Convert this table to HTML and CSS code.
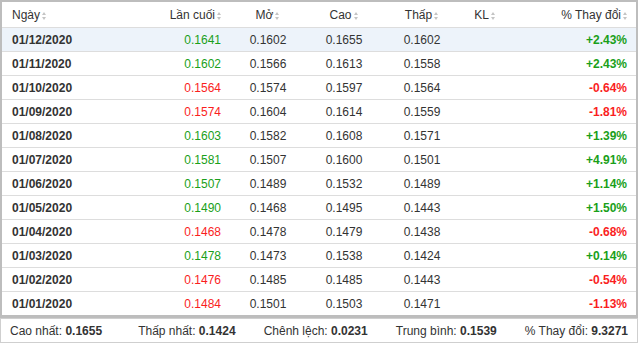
FILE: index.html
```html
<!DOCTYPE html>
<html lang="vi">

<head>
    <meta charset="UTF-8">
    <meta name="viewport" content="width=device-width, initial-scale=1.0">
    <title>Lịch sử giá</title>
    <link rel="stylesheet" href="styles.css">
</head>

<body>
    <div class="history-box">
        <table class="history-table">
            <colgroup>
                <col class="col-date">
                <col class="col-last">
                <col class="col-open">
                <col class="col-high">
                <col class="col-low">
                <col class="col-vol">
                <col class="col-change">
            </colgroup>
            <thead>
                <tr>
                    <th class="left">Ngày<span class="sort"></span></th>
                    <th class="right">Lần cuối<span class="sort"></span></th>
                    <th class="center">Mở<span class="sort"></span></th>
                    <th class="center">Cao<span class="sort"></span></th>
                    <th class="center">Thấp<span class="sort"></span></th>
                    <th class="center">KL<span class="sort"></span></th>
                    <th class="right">% Thay đổi<span class="sort"></span></th>
                </tr>
            </thead>
            <tbody>
                <tr class="row-active">
                    <td class="date">01/12/2020</td>
                    <td class="right up">0.1641</td>
                    <td class="center">0.1602</td>
                    <td class="center">0.1655</td>
                    <td class="center">0.1602</td>
                    <td></td>
                    <td class="right pct up">+2.43%</td>
                </tr>
                <tr>
                    <td class="date">01/11/2020</td>
                    <td class="right up">0.1602</td>
                    <td class="center">0.1566</td>
                    <td class="center">0.1613</td>
                    <td class="center">0.1558</td>
                    <td></td>
                    <td class="right pct up">+2.43%</td>
                </tr>
                <tr>
                    <td class="date">01/10/2020</td>
                    <td class="right down">0.1564</td>
                    <td class="center">0.1574</td>
                    <td class="center">0.1597</td>
                    <td class="center">0.1564</td>
                    <td></td>
                    <td class="right pct down">-0.64%</td>
                </tr>
                <tr>
                    <td class="date">01/09/2020</td>
                    <td class="right down">0.1574</td>
                    <td class="center">0.1604</td>
                    <td class="center">0.1614</td>
                    <td class="center">0.1559</td>
                    <td></td>
                    <td class="right pct down">-1.81%</td>
                </tr>
                <tr>
                    <td class="date">01/08/2020</td>
                    <td class="right up">0.1603</td>
                    <td class="center">0.1582</td>
                    <td class="center">0.1608</td>
                    <td class="center">0.1571</td>
                    <td></td>
                    <td class="right pct up">+1.39%</td>
                </tr>
                <tr>
                    <td class="date">01/07/2020</td>
                    <td class="right up">0.1581</td>
                    <td class="center">0.1507</td>
                    <td class="center">0.1600</td>
                    <td class="center">0.1501</td>
                    <td></td>
                    <td class="right pct up">+4.91%</td>
                </tr>
                <tr>
                    <td class="date">01/06/2020</td>
                    <td class="right up">0.1507</td>
                    <td class="center">0.1489</td>
                    <td class="center">0.1532</td>
                    <td class="center">0.1489</td>
                    <td></td>
                    <td class="right pct up">+1.14%</td>
                </tr>
                <tr>
                    <td class="date">01/05/2020</td>
                    <td class="right up">0.1490</td>
                    <td class="center">0.1468</td>
                    <td class="center">0.1495</td>
                    <td class="center">0.1443</td>
                    <td></td>
                    <td class="right pct up">+1.50%</td>
                </tr>
                <tr>
                    <td class="date">01/04/2020</td>
                    <td class="right down">0.1468</td>
                    <td class="center">0.1478</td>
                    <td class="center">0.1479</td>
                    <td class="center">0.1438</td>
                    <td></td>
                    <td class="right pct down">-0.68%</td>
                </tr>
                <tr>
                    <td class="date">01/03/2020</td>
                    <td class="right up">0.1478</td>
                    <td class="center">0.1473</td>
                    <td class="center">0.1538</td>
                    <td class="center">0.1424</td>
                    <td></td>
                    <td class="right pct up">+0.14%</td>
                </tr>
                <tr>
                    <td class="date">01/02/2020</td>
                    <td class="right down">0.1476</td>
                    <td class="center">0.1485</td>
                    <td class="center">0.1485</td>
                    <td class="center">0.1443</td>
                    <td></td>
                    <td class="right pct down">-0.54%</td>
                </tr>
                <tr>
                    <td class="date">01/01/2020</td>
                    <td class="right down">0.1484</td>
                    <td class="center">0.1501</td>
                    <td class="center">0.1503</td>
                    <td class="center">0.1471</td>
                    <td></td>
                    <td class="right pct down">-1.13%</td>
                </tr>
            </tbody>
        </table>
    </div>

    <div class="summary">
        <span class="summary-first">Cao nhất: <b>0.1655</b></span>
        <span>Thấp nhất: <b>0.1424</b></span>
        <span>Chênh lệch: <b>0.0231</b></span>
        <span>Trung bình: <b>0.1539</b></span>
        <span>% Thay đổi: <b>9.3271</b></span>
    </div>
</body>

</html>
```

FILE: styles.css
```css
body {
    margin: 0;
    width: 638px;
    font-family: 'Liberation Sans', Arial, sans-serif;
    font-size: 12px;
    color: #333;
    background-color: #fff;
}

.history-box {
    border: 2px solid #bdbdbd;
    border-bottom-width: 3px;
}

.history-table {
    width: 100%;
    border-collapse: collapse;
    table-layout: fixed;
}

.col-date {
    width: 138px;
}

.col-last {
    width: 90px;
}

.col-open {
    width: 76px;
}

.col-high {
    width: 76px;
}

.col-low {
    width: 80px;
}

.col-vol {
    width: 46px;
}

.history-table th,
.history-table td {
    height: 23px;
    padding: 0 10px;
    border-bottom: 1px solid #ddd;
    white-space: nowrap;
}

.history-table th {
    height: 25px;
    font-weight: 400;
    color: #333;
}

.history-table tbody tr:last-child td {
    border-bottom: none;
}

.history-table td.pct,
.history-table td.date {
    font-weight: 700;
}

.left {
    text-align: left;
}

.right {
    text-align: right;
}

.center {
    text-align: center;
}

.history-table th.right {
    padding-right: 8px;
}

.history-table td.right {
    padding-right: 9px;
}

.row-active td {
    background-color: #edf3fa;
}

.up {
    color: #1a9f1a;
}

.down {
    color: #fa1e1e;
}

/* little up/down sort arrows next to each header */
.sort {
    display: inline-block;
    width: 5px;
    height: 8px;
    margin-left: 2px;
    vertical-align: -1px;
    position: relative;
}

.sort::before,
.sort::after {
    content: "";
    position: absolute;
    left: 0;
    border-left: 2.5px solid transparent;
    border-right: 2.5px solid transparent;
}

.sort::before {
    top: 0;
    border-bottom: 3px solid #c4c4c4;
}

.sort::after {
    bottom: 0;
    border-top: 3px solid #c4c4c4;
}

.summary {
    display: flex;
    justify-content: space-between;
    align-items: center;
    height: 23px;
    padding: 0 9px;
    border: 1px solid #cfcfcf;
}

.summary-first {
    margin-right: 8px;
}

.summary b {
    font-weight: 700;
}
```
